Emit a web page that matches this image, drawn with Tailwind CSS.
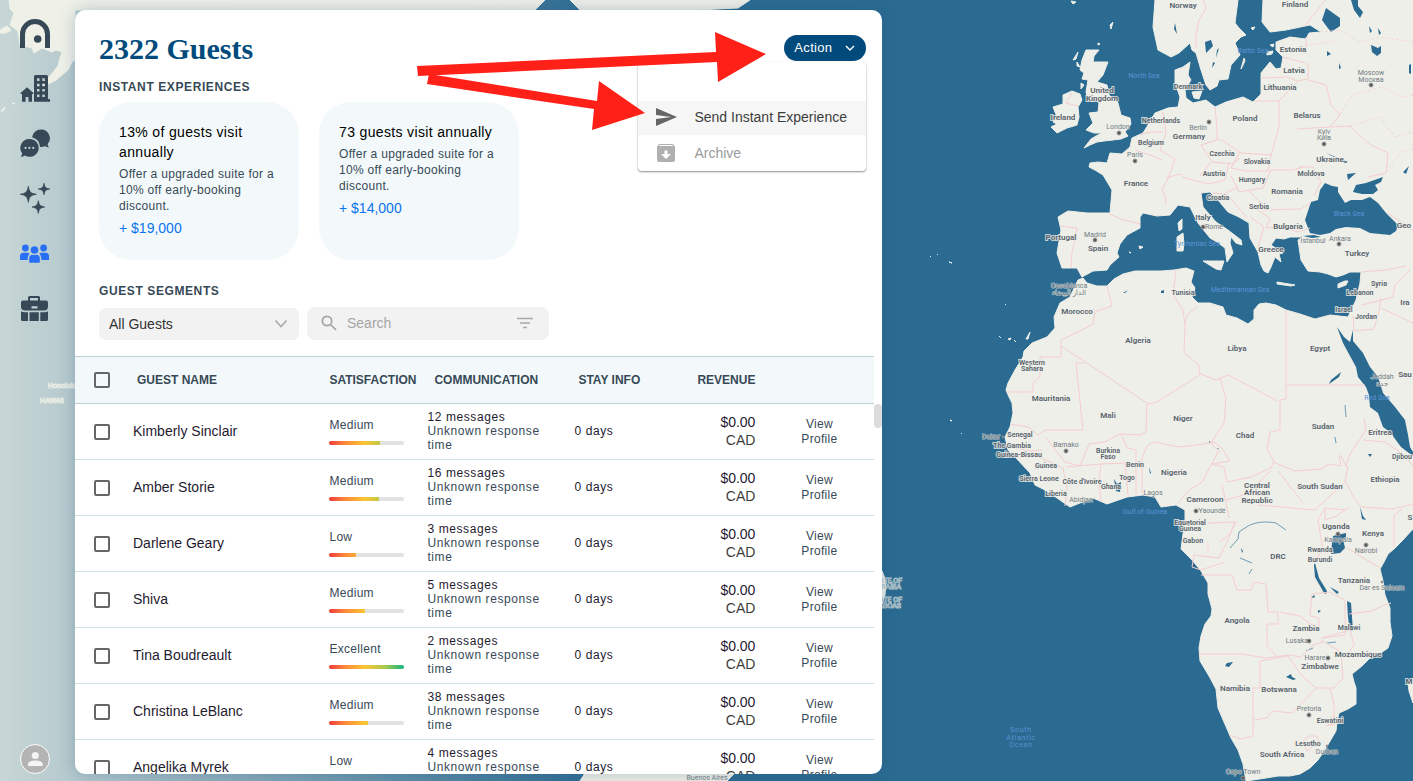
<!DOCTYPE html>
<html lang="en">
<head>
  <meta charset="UTF-8" />
  <meta name="viewport" content="width=device-width, initial-scale=1.0" />
  <title>Guests</title>
  <script src="https://cdn.jsdelivr.net/npm/@tailwindcss/browser@4"></script>
</head>
<body class="relative flex h-screen overflow-hidden bg-[#2b6a91] font-['Liberation_Sans',Arial,sans-serif] text-[#374957]">

  <!-- World map -->
  <svg class="absolute inset-0 h-full w-full" viewBox="0 0 1413 781" preserveAspectRatio="xMinYMin slice" aria-label="Map">
    <g fill="#eeefe8" stroke="#eeefe8" stroke-width="1" stroke-linejoin="round">
      <!-- Europe, Asia and Africa -->
      <path d="M1143 133L1148 125 1155 113 1168 108 1178 107 1180 97 1175 83 1175 70 1183 67 1190 62 1188 75 1191 80 1185 90 1186 98 1193 103 1206 100 1215 107 1226 102 1243 97 1253 102 1261 94 1261 73 1270 62 1276 69 1281 68 1283 57 1276 50 1276 42 1290 37 1306 39 1309 33 1321 32 1310 25 1286 30 1270 32 1262 22 1263 0H1413
        V529L1402 541 1394 549 1388 554 1384 562 1380 569 1383 581 1385 595 1390 608 1390 622 1392 636 1388 648 1378 655 1370 658 1362 666 1352 674 1354 682 1356 688 1356 704 1348 709 1339 713 1337 722 1336 731 1326 748 1318 760 1310 768 1300 774 1290 776 1278 776 1266 778 1246 781 1243 764 1238 750 1231 738 1224 722 1218 708 1216 689 1209 676 1200 661 1199 648 1201 636 1205 624 1211 616 1212 609 1208 594 1208 583 1201 571 1192 560 1181 549 1183 534 1185 520 1185 510 1176 505 1161 507 1155 497 1143 495 1127 497 1107 504 1093 498 1080 503 1070 507 1057 498 1045 490 1035 485 1030 473 1016 458 1008 450 1005 437 1010 427 1013 413 1012 403 1009 397 1006 390 1008 383 1015 370 1023 357 1024 351 1032 343 1047 337 1055 328 1054 317 1060 303 1070 297 1078 280 1083 278 1087 283 1097 286 1107 286 1114 279 1123 274 1135 271 1147 271 1161 271 1174 270 1186 268 1194 271 1191 282 1195 288 1192 297 1198 303 1210 303 1223 307 1226 315 1237 318 1248 324 1254 319 1254 310 1259 304 1266 303 1276 305 1286 310 1300 314 1315 319 1330 315 1348 317 1356 300 1360 283 1361 272 1350 272 1343 275 1336 277 1328 274 1320 272 1308 271 1301 260 1298 240 1303 237 1290 237 1284 239 1276 238 1271 245 1283 253 1279 254 1281 262 1275 257 1271 267 1268 273 1264 271 1261 265 1258 252 1250 238 1249 223 1239 217 1228 212 1218 200 1210 192 1201 193 1203 207 1216 222 1228 230 1241 240 1242 245 1236 243 1231 237 1230 243 1233 253 1227 262 1225 248 1217 242 1210 238 1198 223 1190 207 1178 205 1170 215 1157 216 1143 213 1140 217 1140 228 1127 235 1120 244 1117 253 1119 257 1110 265 1107 270 1093 271 1082 277 1077 268 1062 268 1057 253 1061 230 1058 217 1068 211 1087 213 1110 213 1112 190 1103 175 1095 170 1089 167 1090 163 1098 162 1107 163 1110 153 1122 154 1130 147 1132 138z"/>
      <path d="M1155 0L1153 27 1158 50 1171 57 1179 53 1190 43 1192 50 1196 53 1201 70 1206 85 1210 90 1217 86 1219 80 1228 79 1231 65 1240 55 1235 43 1241 37 1246 35 1239 28 1235 23 1238 0z"/>
      <path d="M1086 50L1099 50 1094 56 1093 62 1108 62 1103 75 1097 82 1107 85 1109 95 1118 103 1121 115 1130 118 1131 124 1125 132 1128 136 1121 139 1113 140 1104 141 1097 142 1090 145 1084 148 1091 139 1096 136 1102 133 1094 133 1086 130 1093 123 1089 113 1098 112 1099 103 1096 99 1088 100 1086 92 1088 80 1082 79 1084 73 1080 70 1082 60z"/>
      <path d="M1072 91L1080 94 1082 100 1078 107 1079 117 1077 125 1067 128 1057 133 1051 127 1057 124 1053 122 1057 117 1053 107 1063 104 1063 95z"/>
      <path d="M1078 52l-5 8 3-1zM1077 62l3 5-3-1zM1113 22l-3 3 1 4zM1071 1l5 1-3 2zM1098 43l2 1-2 1zM1081 83l3 2-3 4z"/>
      <!-- Islands -->
      <path d="M1182 219l-4 4 1 8 3-2zM1183 233l-6 4 0 14 6 0 1-7zM1203 261l21 0-3 9-5-1zM1277 282l18 3-4 1-14-2zM1345 281l-7 3 0 4 8-3 2-4zM1139 246l4 1-3 2zM1129 252l2 1zM1147 244zM1244 58l-3 11 4-8zM1267 52l6-1-1 3-5 1zM1270 45l4-1-1 3zM1192 92l10-1-3 8-5-1zM1251 28l4-1-2 3zM1340 195l7 1-1 6-4-1z"/>
      <path d="M999 336l2 2zM1008 339l3-1-1 2zM1014 340l2 2zM1026 339l4-7-2 7zM950 420l2 1zM957 423zM961 433l1 1zM967 427zM930 256l1 1zM937 254l1 1zM949 262l3 1zM1005 304l1 1zM1413 678l-5 5 1 8 4 12z"/>
      <!-- Americas -->
      <path d="M9 0L10 9 14 13 10 25 18 31 20 45 32 48 34 53 42 48 52 52 56 50 62 52 60 58 58 66 50 76 36 88 33 91 44 86 56 80 68 70 72 62 75 60V0z"/>
      <path d="M0 30l7-4 4 4-5 3-6 0zM1 111l4-4-2 4zM12 104l3-1zM75 0h470l-10 10H75zM570 0h180l-12 8-40 2H580zM580 781l5-8h150l-8 8zM882 571l4 10-1 14-3 9z"/>
    </g>

    <!-- Inland seas and lakes -->
    <g fill="#2b6a91">
      <path d="M1325 183L1332 186 1338 187 1338 192 1345 203 1351 200 1362 200 1370 197 1378 203 1386 213 1398 225 1396 231 1390 235 1380 234 1370 233 1360 228 1346 227 1336 229 1330 233 1320 235 1310 233 1305 220 1311 202 1318 200 1320 190zM1353 192L1356 185 1366 183 1383 177 1381 182 1375 185 1378 190 1373 194 1362 194zM1303 236l11-1 7 2-9 1z"/>
      <path d="M1337 327L1344 337 1350 342 1353 330 1353 341 1363 353 1370 367 1378 377 1383 393 1395 407 1405 420 1408 435 1410 447 1413 452V456L1401 447 1390 432 1383 427 1378 413 1370 407 1369 395 1366 387 1358 377 1356 367 1343 343z"/>
      <path d="M1322 20l4-12 14 10 0 8-9 6-4-5zM1351 0h7l0 6 5 6-3 6-6-8zM1371 45l7 3 3-2 0 7-4 3-5-4zM1369 26l3 5-2 2zM1378 28l3 5-2 2zM1205 42l6-2 2 6-7 7zM1217 50l2-2-3 10zM1213 62l2 1-3 5zM1327 51l4 3-4 2zM1339 63l2 5-2 1zM1409 65l2-1 0 10-2-1zM1175 23l2 11-3-5zM1347 174l9-1-8 7zM1403 172l6-6-3 8zM1326 153l22 9-3 1zM1240 20l2 3-2 1zM1221 25l2 3zM1200 14l1 4z"/>
      <path d="M1333 536l13-3 0 4-3 2 2 9-5 5-9 1 1-11zM1315 563l4 15 8 13-1 3-2-1-9-16-1-12zM1347 601l4 2 2 28-3 0-2-14zM1330 587l9 5-2 2zM1360 507l3 9 3 4-4-1zM1227 663l6-1-4 5-4-1zM1286 677l5-3 1 3 4 2-3 1zM1368 454l4 0-2 3zM1161 291l3-1 0 3-3 0zM1123 293l5-3-3 3zM1341 372l-2 5-10 7 2-4zM1114 479l3 5 4-2-1 10-4-1zM1241 548l2 3-1 2zM1311 597l4-2-1 3zM1318 610l3 1-3 2zM1317 538l1 2zM1149 467l2 6-1 1zM1209 441l3 2-3 0zM1217 448l2 0-1 1zM1335 408l1 0z"/>
      <path d="M1230 548l8-9 1-7 9-6c7-4 18-5 28-3l10 7M1240 558l12 5M1327 643l9-1M1306 651l7-3M1249 574l3-5M1345 405l1 12M1335 437l1 6" fill="none" stroke="#6f9db4"/>
    </g>

    <!-- Borders -->
    <g fill="none" stroke="#f6cdd0" stroke-width="1" stroke-linejoin="round">
      <path d="M1203 0l3 8-7 12-3 16 0 12M1325 0l-20 26M1306 37l0 17M1283 57l22 6M1262 78l26-1 9 4 11-2 0-16M1308 80l18 5 5 20 9 10-10 12-33 2M1297 82l-18 19-25 0M1279 101l0 26-8 28-30-2-19-13-5 0 0-12-2-21M1217 140l-16 5 11 17 20 2 8-6M1163 112l3 22-6 16 15 9-7 20-6 10 4 10-1 6M1135 150l15 5 12 5M1140 135l10-3 13 0M1166 178l14-4 5 4 24 6 16-4 4-18M1210 163l-10 13M1239 153l-8 15 15 3 22 0 3-16M1231 176l8 16 24-4 8-18 22 0 10-3M1213 193l11 1 14-7M1227 194l20 24M1248 190l12 12-2 8 12 8-4 10 17-1 15 5 12-4M1263 210l38-1 10-6M1299 167l14 0 8 15-7 14M1330 127l20-1 19 18 19 9-2 20-18 4M1388 213l25 18M1250 217l14 10-6 20M1109 214l12 5 19 5M1061 226l16 2-2 12-3 12-1 16M1072 93l-6 10 12 3M1361 272l25-2 20-4"/>
      <path d="M1320 32l20-2 20 12 20-5 33 5M1306 45l30-4M1340 115l12-20 30-8 20 10 11-2M1350 126l30-9 15 20 18-5M1386 172l15-20 12-3" stroke-dasharray="3 2" opacity=".7"/>
      <path d="M1107 286l5 20-17 6-2 12-11 6-21 10v17h-21v20l-7 6v9h-26M1061 346l26 17 42 28 15 10 4 3 9-2 44-28 15 6 12-5 50 26M1084 363h-8l7 67h-38l-7 5-9-8-19-3M1147 404l-1 28-6 3-20-1-15 8-16 2-9 22-15-4-20-25M1010 447l20 4 12-1M1016 458l18-3 14 6 15 7 4 20-2 18M1066 467l35-3-2 17 2 20M1101 464l24-1 3 32M1121 434l6 14 9 2 0 44M1147 446l-5 12 0 35"/>
      <path d="M1176 270l-3 25 10 15 2 15-1 28 15 12 1 10M1184 324l4-10 9-7M1286 310v89l-6 1v30l-10 2-3 17 7 12-3 7-20 9-24 5-3-15-12-3 18-3-9-14-7-5-17 3-18 2-25-5-8 5M1220 378l6 20-2 25-13 20 9 10M1287 385h78M1273 462l22 9 26-2 8-5 12 2-2-12M1278 471l25 32M1218 452l-16 30-14 9-10 12M1222 485l4 18 3 15M1226 500l20-6 25-23M1341 456l5 10 4-12 16-24-2-12M1346 482l8 16 7 9M1348 466l-3 16-30 28-57-5M1363 440l22 2 18 12 10 12M1362 507l31 2 20-5M1353 316l1 15 20-2 5-18 2-13M1362 305l31-8 2-12 15-15M1381 308l32 15"/>
      <path d="M1208 523l28-1-6 12-10 8M1208 542l0 8M1235 522l-8 20-8 16-25-3-2 12 9 3 24-8M1201 575h31l5 15h14l3-8 12 2 2 28h10v12h-11v22l10 11M1199 654h43l24 4 23-3 12 2 12-12 10-3M1260 661v27h-7v48l-12 3-12-4M1260 661l28-5 14 20 14 12 18 0 9-10-2-26-20-12M1254 720l13-2 5-7 20 2 12-12 12-13M1330 689l4 15v20l-8 2M1280 612l20 4 10 8 9 3 0-9-9-2 2-22 18-2 15 8M1345 600l0 35-23 3M1349 614l23-3 10-5 9-3M1322 638l28-8 4 15-7 10M1315 560l8-10-5-30 7-12 20 2M1347 548l33 20M1325 508l0 12 12-4 12-9M1394 547l0-32 8-6M1303 741l6-5 8 0 2 5-12 10zM1328 720l6-4 1 8-6 1z"/>
    </g>

    <!-- Country names -->
    <g class="font-['Roboto',sans-serif]" font-size="8" font-weight="600" fill="#56616c" stroke="#eeefe8" stroke-width="2" stroke-opacity=".8" paint-order="stroke" text-anchor="middle">
      <text x="1183" y="8">Norway</text><text x="1295" y="7">Finland</text><text x="1293" y="52">Estonia</text><text x="1294" y="73">Latvia</text><text x="1280" y="90">Lithuania</text>
      <text x="1102" y="93">United</text><text x="1102" y="101">Kingdom</text><text x="1063" y="120">Ireland</text><text x="1245" y="121">Poland</text><text x="1307" y="118">Belarus</text>
      <text x="1189" y="139">Germany</text><text x="1136" y="186">France</text><text x="1330" y="162">Ukraine</text><text x="1287" y="194">Romania</text><text x="1203" y="220">Italy</text><text x="1288" y="229">Bulgaria</text>
      <text x="1271" y="252">Greece</text><text x="1357" y="256">Turkey</text><text x="1404" y="228">Geo</text><text x="1061" y="240">Portugal</text><text x="1098" y="251">Spain</text>
      <text x="1077" y="314">Morocco</text><text x="1138" y="343">Algeria</text><text x="1237" y="351">Libya</text><text x="1320" y="351">Egypt</text><text x="1405" y="305">Ira</text><text x="1405" y="377">Sau</text>
      <text x="1051" y="401">Mauritania</text><text x="1108" y="418">Mali</text><text x="1183" y="421">Niger</text><text x="1245" y="438">Chad</text><text x="1323" y="429">Sudan</text><text x="1380" y="435">Eritrea</text>
      <text x="1174" y="475">Nigeria</text><text x="1385" y="482">Ethiopia</text><text x="1320" y="489">South Sudan</text><text x="1257" y="488">Central</text><text x="1257" y="495">African</text><text x="1257" y="503">Republic</text><text x="1205" y="502">Cameroon</text>
      <text x="1336" y="529">Uganda</text><text x="1373" y="536">Kenya</text><text x="1278" y="559">DRC</text><text x="1354" y="583">Tanzania</text><text x="1237" y="623">Angola</text><text x="1306" y="631">Zambia</text>
      <text x="1358" y="657">Mozambique</text><text x="1320" y="669">Zimbabwe</text><text x="1235" y="691">Namibia</text><text x="1279" y="692">Botswana</text><text x="1282" y="757">South Africa</text><text x="1409" y="684">M</text><text x="1410" y="520">S</text>
      <g font-size="7">
        <text x="1188" y="89">Denmark</text><text x="1161" y="123">Netherlands</text><text x="1151" y="145">Belgium</text><text x="1222" y="156">Czechia</text><text x="1257" y="164">Slovakia</text><text x="1214" y="176">Austria</text><text x="1252" y="182">Hungary</text>
        <text x="1311" y="176">Moldova</text><text x="1218" y="200">Croatia</text><text x="1259" y="209">Serbia</text><text x="1183" y="295">Tunisia</text><text x="1379" y="286">Syria</text><text x="1360" y="295">Lebanon</text><text x="1344" y="312">Israel</text><text x="1366" y="319">Jordan</text>
        <text x="1032" y="365">Western</text><text x="1032" y="371">Sahara</text><text x="1020" y="437">Senegal</text><text x="1012" y="448">The Gambia</text><text x="1019" y="457">Guinea-Bissau</text><text x="1046" y="468">Guinea</text><text x="1039" y="481">Sierra Leone</text><text x="1056" y="496">Liberia</text>
        <text x="1082" y="484">Côte d'Ivoire</text><text x="1108" y="453">Burkina</text><text x="1108" y="459">Faso</text><text x="1111" y="489">Ghana</text><text x="1127" y="480">Togo</text><text x="1135" y="467">Benin</text><text x="1402" y="459">Djibou</text>
        <text x="1190" y="525">Equatorial</text><text x="1190" y="531">Guinea</text><text x="1193" y="543">Gabon</text><text x="1320" y="552">Rwanda</text><text x="1320" y="562">Burundi</text><text x="1349" y="630">Malawi</text><text x="1330" y="723">Eswatini</text><text x="1308" y="746">Lesotho</text>
      </g>
    </g>

    <!-- Cities -->
    <g class="font-['Roboto',sans-serif]" font-size="7" fill="#717b84" stroke="#eeefe8" stroke-width="1" stroke-opacity=".7" paint-order="stroke" text-anchor="middle">
      <text x="1118" y="129">London</text><text x="1135" y="157">Paris</text><text x="1095" y="237">Madrid</text><text x="1198" y="130">Berlin</text><text x="1371" y="75">Moscow</text><text x="1371" y="82">Москва</text><text x="1324" y="134">Kyiv</text><text x="1324" y="140">Київ</text>
      <text x="1214" y="229">Rome</text><text x="1313" y="243">İstanbul</text><text x="1340" y="241">Ankara</text><text x="1069" y="288">Casablanca</text><text x="1069" y="295">الدار البيضاء</text><text x="1382" y="379">Jeddah</text><text x="1382" y="386">جدة</text>
      <text x="991" y="439">Dakar</text><text x="1066" y="447">Bamako</text><text x="1081" y="502">Abidjan</text><text x="1153" y="495">Lagos</text><text x="1212" y="513">Yaoundé</text><text x="1338" y="542">Kampala</text><text x="1366" y="553">Nairobi</text><text x="1382" y="590">Dar es Salaam</text>
      <text x="1297" y="643">Lusaka</text><text x="1315" y="660">Harare</text><text x="1309" y="711">Pretoria</text><text x="1327" y="754">Durban</text><text x="1243" y="774">Cape Town</text><text x="707" y="780">Buenos Aires</text>
      <g fill="#9db4bf" text-anchor="end"><text x="902" y="583">STATE OF</text><text x="901" y="589">PARAÍBA</text><text x="902" y="602">STATE OF</text><text x="901" y="608">ALAGOAS</text></g>
      <text x="62" y="388" fill="#eeefe8">Honolulu</text><text x="52" y="403" fill="#eeefe8">HAWAII</text>
    </g>
    <g fill="#555" stroke="#999" stroke-width="1">
      <circle cx="1119" cy="133" r="2"/><circle cx="1135" cy="161" r="2"/><circle cx="1095" cy="240" r="2"/><circle cx="1209" cy="122" r="2"/><circle cx="1371" cy="85" r="2"/><circle cx="1324" cy="144" r="2"/><circle cx="1203" cy="227" r="2"/><circle cx="1339" cy="244" r="2"/><circle cx="1066" cy="451" r="2"/><circle cx="1196" cy="511" r="2"/><circle cx="1338" cy="534" r="2"/><circle cx="1366" cy="545" r="2"/><circle cx="1309" cy="641" r="2"/><circle cx="1328" cy="658" r="2"/><circle cx="1309" cy="715" r="2"/><circle cx="1243" cy="778" r="2"/><circle cx="1003" cy="437" r="1"/><circle cx="1382" cy="582" r="1"/><circle cx="1327" cy="746" r="1"/>
    </g>

    <!-- Water names -->
    <g class="font-['Roboto',sans-serif]" font-size="7" fill="#5b93d6" text-anchor="middle">
      <text x="1144" y="78">North Sea</text><text x="1253" y="53">Baltic Sea</text><text x="1349" y="216">Black Sea</text><text x="1197" y="246">Tyrrhenian Sea</text><text x="1240" y="292">Mediterranean Sea</text><text x="1377" y="400">Red Sea</text><text x="1145" y="514">Gulf of Guinea</text>
      <g class="tracking-widest"><text x="1021" y="732">South</text><text x="1021" y="740">Atlantic</text><text x="1021" y="747">Ocean</text></g>
    </g>
  </svg>
  <div class="absolute inset-y-0 left-0 w-[600px] bg-linear-to-r from-[#eff1e7]/80 to-[#eff1e7]/0"></div>

  <!-- Sidebar -->
  <nav class="relative flex w-[75px] shrink-0 flex-col gap-[25px] pt-[19px] pb-[7px] pl-5 text-[#374957]" aria-label="Main">
    <a href="#" aria-label="Home">
      <svg class="size-[30px]" viewBox="0 0 30 30" fill="none"><path d="M2.5 29V15a12.5 12.5 0 0 1 25 0v14" stroke="currentColor" stroke-width="5"/><circle cx="17.7" cy="20" r="3.8" fill="currentColor"/></svg>
    </a>
    <a href="#" aria-label="Properties">
      <svg class="size-[30px]" viewBox="0 0 30 30" fill="currentColor" fill-rule="evenodd"><path d="M15.5 1h11Q28 1 28 2.500V25h1.200q.8 0 .8.800v2H14V2.500Q14 1 15.500 1zM17 4.300h2.500v2.600H17zm5.300 0h2.500v2.600h-2.500zM17 9.700h2.500v2.600H17zm5.300 0h2.500v2.600h-2.500zM17 15h2.500v2.600H17zm5.300 0h2.500v2.600h-2.500zM17 20.400h2.500V23H17zm5.300 0h2.500V23h-2.500z"/><path d="M7 13.300.6 19q-.6 1 .4 1h1v7.700h3.600V23h2.900v4.700H12V20h1.200q.8-.3.200-1z"/></svg>
    </a>
    <a href="#" aria-label="Messages">
      <svg class="size-[30px]" viewBox="0 0 30 30" fill="currentColor"><path d="M20.700.6a8.700 8.700 0 0 0-8.600 7.600 11 11 0 0 1 8 9.700c2 .2 3.600-.2 5-.9 1.200 1 2.500 1.300 3.900 1.400-.9-1-1.300-2.200-1.300-3.400A8.700 8.700 0 0 0 20.700.6z"/><path fill-rule="evenodd" d="M9.300 10a8.900 8.900 0 0 0-7.200 14.200c-.1 1.300-.5 2.500-1.400 3.500 1.700 0 3.100-.5 4.300-1.300A8.900 8.900 0 1 0 9.300 10zM5.500 17.800a1.100 1.100 0 1 1 0 2.200 1.100 1.100 0 0 1 0-2.200zm3.900 0a1.100 1.100 0 1 1 0 2.200 1.100 1.100 0 0 1 0-2.200zm3.900 0a1.100 1.100 0 1 1 0 2.200 1.100 1.100 0 0 1 0-2.200z"/></svg>
    </a>
    <a href="#" aria-label="Experiences">
      <svg class="size-[30px] overflow-visible" viewBox="0 0 30 30" fill="currentColor" stroke="currentColor" stroke-width=".8" stroke-linejoin="round"><path d="M8.300 2.300c1 5.800 2.200 7 8 8-5.800 1-7 2.200-8 8-1-5.800-2.200-7-8-8 5.800-1 7-2.200 8-8zM24-.7c.8 4.100 1.600 4.900 5.700 5.700-4.100.8-4.900 1.600-5.700 5.700-.8-4.100-1.600-4.900-5.700-5.700 4.100-.8 4.900-1.600 5.700-5.700zM18.300 16.700c.9 4.500 1.800 5.400 6.300 6.300-4.500.9-5.400 1.800-6.300 6.300-.9-4.500-1.800-5.400-6.300-6.300 4.500-.9 5.400-1.800 6.300-6.300z"/></svg>
    </a>
    <a href="#" class="text-[#286ff5]" aria-label="Guests">
      <svg class="size-[30px]" viewBox="0 0 30 30" fill="currentColor"><circle cx="5.400" cy="9" r="3.400"/><circle cx="23.600" cy="9" r="3.400"/><circle cx="14.500" cy="11" r="3.800"/><path d="M0 21v-3.600q0-3.700 3.700-3.700h3.600q1.600 0 2.400 1-2 1.800-2 4.400V21zM29 21v-3.600q0-3.700-3.700-3.700h-3.600q-1.600 0-2.400 1 2 1.800 2 4.400V21zM9.200 23v-3.600q0-3.700 3.500-3.700 1.900.8 3.600 0 3.500 0 3.500 3.700V23q0 .8-.8.800h-9q-.8 0-.8-.8z"/></svg>
    </a>
    <a href="#" aria-label="Business">
      <svg class="size-[30px]" viewBox="0 0 30 30" fill="currentColor" fill-rule="evenodd"><path d="M8 6.500V3.500Q8 2 9.500 2h9Q20 2 20 3.500v3h6Q28 6.500 28 8.500v4Q28 16.500 24 16.500H5Q1 16.500 1 12.500v-4Q1 6.500 3 6.500zm2 0h8V4h-8zm1.500 5.700v2.300h6v-2.300z"/><path d="M1 17.200q1.500 1.100 3.500 1.100H8V27H2.500Q1 27 1 25.500zM9.500 18.300h9.300V27H9.500zM20.300 18.300h4q2.200 0 3.700-1.100v8.300q0 1.500-1.500 1.500h-6.200z"/></svg>
    </a>
    <button class="mt-auto size-[30px] rounded-full border border-white bg-[#b4b4b4]" aria-label="Account">
      <svg class="size-7" viewBox="0 0 28 28" fill="#f4f4f4"><circle cx="14.300" cy="10.500" r="3.600"/><path d="M7 21v-1.800q0-3.500 7.300-3.700 7.400.2 7.400 3.700V21z"/></svg>
    </button>
  </nav>

  <!-- Guests panel -->
  <main class="relative mt-[10px] mb-[7px] flex w-4/7 flex-col overflow-hidden rounded-[10px] bg-white shadow-[0_0_16px_rgba(43,90,130,0.3)]">
    <div class="relative px-6 pt-[21px]">
      <div class="flex items-start justify-between">
        <h1 class="font-['Liberation_Serif',serif] text-[30px] leading-9 font-bold text-[#004a7c]">2322 Guests</h1>
        <button class="relative z-10 mt-1 -mr-2 flex h-[26px] items-center gap-3 rounded-full bg-[#004a7c] px-[10px] text-[13px] tracking-wide text-white" aria-haspopup="menu" aria-expanded="true">
          Action
          <svg class="size-3" viewBox="0 0 12 12" fill="none" stroke="currentColor" stroke-width="1.400"><path d="M2 4l4 4 4-4"/></svg>
        </button>
      </div>

      <div role="menu" class="absolute top-[52px] right-4 z-0 w-[228px] rounded bg-white pt-[39px] text-sm shadow-[0_1px_2px_rgba(0,0,0,0.45)]">
        <button role="menuitem" class="flex h-[34px] w-full items-center gap-[17px] bg-[#f6f6f6] pb-0.5 pl-[18px] text-[#3d3d3d]">
          <svg class="h-[18px] w-[21px]" viewBox="0 0 21 18" fill="#666"><path d="M0 18l21-9L0 0v7l15 2-15 2z"/></svg>
          Send Instant Experience
        </button>
        <button role="menuitem" class="flex h-9 w-full items-center gap-[17px] pl-[18px] text-[#9b9b9b]" disabled>
          <svg class="h-[18px] w-[21px]" viewBox="0 0 21 18" fill="#b0b0b0" fill-rule="evenodd"><path d="M3 0h14l2 2.500V16q0 2-2 2H3q-2 0-2-2V2.500zm.600 1L2.800 2h14.400l-.8-1zM8.500 6.500V10H5l5 5 5-5h-3.500V6.500z"/></svg>
          Archive
        </button>
      </div>

      <h2 class="mt-3 text-xs leading-4 font-bold tracking-wider">INSTANT EXPERIENCES</h2>
      <div class="mt-[7px] flex gap-5">
        <article class="w-[200px] rounded-[32px] bg-[#f3f9fa] px-5 pt-5 pb-[22px]">
          <h3 class="text-sm leading-5 tracking-wide text-black">13% of guests visit annually</h3>
          <p class="mt-1 text-xs leading-4 tracking-wide">Offer a upgraded suite for a 10% off early-booking discount.</p>
          <p class="mt-1 text-sm leading-5 text-[#0a74f0]">+ $19,000</p>
        </article>
        <article class="w-[200px] rounded-[32px] bg-[#f3f9fa] px-5 pt-5 pb-[22px]">
          <h3 class="text-sm leading-5 tracking-wide text-black">73 guests visit annually</h3>
          <p class="mt-1 text-xs leading-4 tracking-wide">Offer a upgraded suite for a 10% off early-booking discount.</p>
          <p class="mt-1 text-sm leading-5 text-[#0a74f0]">+ $14,000</p>
        </article>
      </div>

      <h2 class="mt-[23px] text-xs leading-4 font-bold tracking-wider">GUEST SEGMENTS</h2>
      <div class="mt-2 flex items-center gap-2">
        <div class="relative w-[200px]">
          <select aria-label="Guest segment" class="h-8 w-full appearance-none rounded-md bg-[#f2f2f2] px-[10px] text-sm text-[#333]">
            <option>All Guests</option>
          </select>
          <svg class="pointer-events-none absolute top-[10px] right-3 size-3" viewBox="0 0 12 12" fill="none" stroke="#aaa" stroke-width="1.600"><path d="M.5 2.500L6 8.500l5.500-6"/></svg>
        </div>
        <div class="flex h-[33px] w-[242px] items-center rounded-lg bg-[#f2f2f2] pr-4 pb-0.5 pl-[14px]">
          <svg class="size-4" viewBox="0 0 16 16" fill="none" stroke="#a5a5a5" stroke-width="1.700"><circle cx="6" cy="6" r="4.700"/><path d="M9.500 9.500l5.500 5.500"/></svg>
          <input type="search" aria-label="Search guests" placeholder="Search" class="ml-[10px] min-w-0 flex-1 bg-transparent text-sm text-[#333] placeholder:text-[#a5a5a5]" />
          <button aria-label="Filter"><svg class="h-4 w-4" viewBox="0 0 16 16" stroke="#aaa" stroke-width="1.600"><path d="M0 3.500h16M3 8h10M6 12.500h4"/></svg></button>
        </div>
      </div>
    </div>

    <div class="relative mt-4 min-h-0 flex-1 overflow-hidden pr-2">
      <table class="w-full table-fixed border-collapse text-xs">
        <colgroup>
          <col class="w-[58px]" /><col /><col class="w-[98px]" /><col class="w-[147px]" /><col class="w-[86px]" /><col class="w-[95px]" /><col class="w-[119px]" />
        </colgroup>
        <thead>
          <tr class="h-[47px] border-y border-[#bcd2d9] bg-[#f3f9fa] text-left">
            <th class="pl-[19px]"><input type="checkbox" aria-label="Select all guests" class="block size-4 appearance-none rounded-[2px] border-2 border-[#666]" /></th>
            <th class="pl-1">GUEST NAME</th>
            <th>SATISFACTION</th>
            <th class="pl-[7px]">COMMUNICATION</th>
            <th class="pl-1">STAY INFO</th>
            <th class="text-right">REVENUE</th>
            <th></th>
          </tr>
        </thead>
        <tbody id="guests"></tbody>
      </table>
      <div class="absolute top-12 right-0 h-6 w-2 rounded bg-[#dcdcdc]"></div>
    </div>
  </main>

  <!-- Pointers to the action menu -->
  <svg class="pointer-events-none absolute top-0 left-0 z-20" width="800" height="150" viewBox="0 0 800 150" fill="#ff2018">
    <path d="M417 66L716 52 715 32 766 54 718 82 717 62 418 76z"/>
    <path d="M429 74L597 101 599 81 645 113 592 130 594 109 427 84z"/>
  </svg>

  <script>
    const guests = [
      { name: "Kimberly Sinclair", level: "Medium", score: 68, messages: 12 },
      { name: "Amber Storie", level: "Medium", score: 66, messages: 16 },
      { name: "Darlene Geary", level: "Low", score: 35, messages: 3 },
      { name: "Shiva", level: "Medium", score: 48, messages: 5 },
      { name: "Tina Boudreault", level: "Excellent", score: 100, messages: 2 },
      { name: "Christina LeBlanc", level: "Medium", score: 52, messages: 38 },
      { name: "Angelika Myrek", level: "Low", score: 30, messages: 4 }
    ];

    document.getElementById("guests").innerHTML = guests.map(g => `
      <tr class="h-14 border-b border-[#d0e2e7] text-[#1f1b30]">
        <td class="pl-[19px]"><input type="checkbox" aria-label="Select ${g.name}" class="block size-4 appearance-none rounded-[2px] border-2 border-[#666]" /></td>
        <td class="pb-0.5 text-sm">${g.name}</td>
        <td class="pb-0.5 tracking-wide text-[#374957]">
          <div class="leading-4">${g.level}</div>
          <div class="mt-2 h-1 w-[75px] overflow-hidden rounded-full bg-[#e2e2e2]">
            <div class="h-full overflow-hidden" style="width: ${g.score}%">
              <div class="h-full w-[75px] bg-linear-[90deg,#f03a3a,#ff8a3c_22%,#fcc430_47%,#a9c94f_75%,#10b981]"></div>
            </div>
          </div>
        </td>
        <td class="pr-6 pb-0.5 leading-[14px] tracking-wider">${g.messages} messages<br /><span class="text-[#374957]">Unknown response time</span></td>
        <td class="pb-0.5 tracking-wider">0 days</td>
        <td class="pb-0.5 text-right text-sm leading-[18px]">$0.00<br /><span class="text-[#3d3d3d]">CAD</span></td>
        <td class="pl-[9px] text-center leading-[15px] tracking-wide"><a href="#" class="text-[#374957]">View<br />Profile</a></td>
      </tr>`).join("");
  </script>
</body>
</html>
